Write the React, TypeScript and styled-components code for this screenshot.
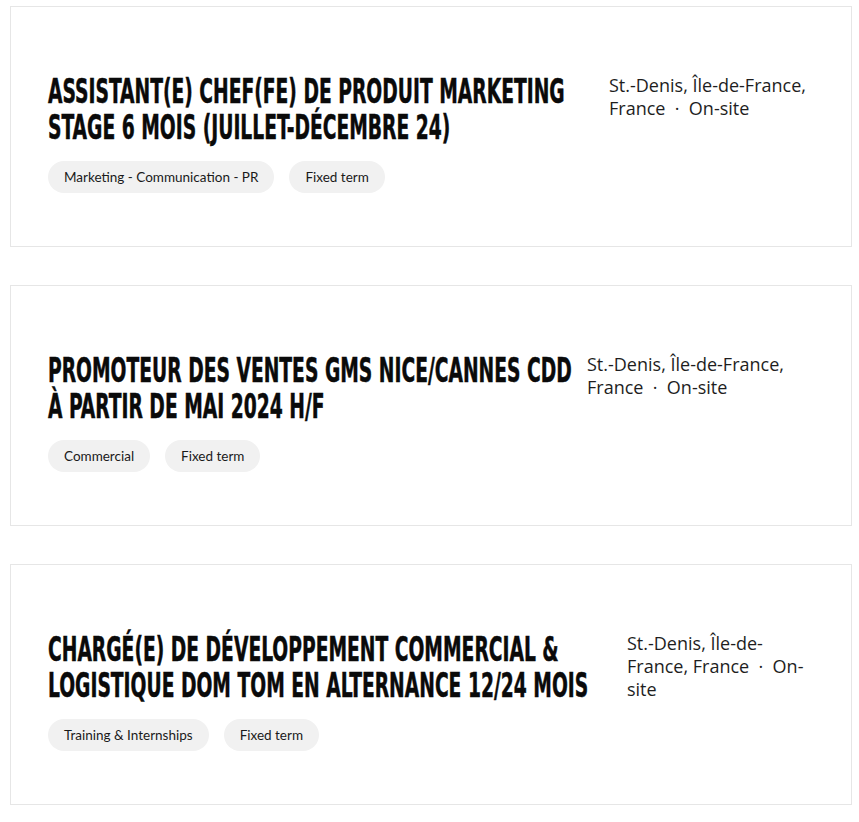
import React from 'react'
import styled, { createGlobalStyle } from 'styled-components'

const GlobalStyle = createGlobalStyle`
  body {
    margin: 0;
    background: #ffffff;
  }
`

const JobList = styled.div`
  display: flex;
  flex-direction: column;
  gap: 38px;
  padding: 6px 7px 16px 10px;
`

const Card = styled.article`
  display: flex;
  gap: 12px;
  align-items: flex-start;
  border: 1px solid #e6e6e6;
  padding: 67px 38px 53px 37px;
`

const Main = styled.div`
  flex: 1;
  min-width: 0;
`

const Title = styled.h2`
  margin: 0;
  font-family: "DejaVu Sans", sans-serif;
  font-stretch: condensed;
  font-weight: 700;
  font-size: 33px;
  line-height: 36px;
  color: #0a0a0a;
  -webkit-text-stroke: 0.5px #0a0a0a;
`

const TitleLine = styled.span`
  display: block;
  white-space: nowrap;
  transform: scaleX(0.63);
  transform-origin: left center;
`

const Tags = styled.div`
  display: flex;
  gap: 15px;
  margin-top: 15px;
`

const Tag = styled.span`
  display: inline-flex;
  align-items: center;
  height: 32px;
  padding: 0 16px;
  border-radius: 16px;
  background: #f1f1f1;
  font-family: Lato, "Open Sans", sans-serif;
  font-size: 13.5px;
  color: #1a1a1a;
`

const Location = styled.p<{ $width: number }>`
  margin: 0;
  width: ${({ $width }) => $width}px;
  flex-shrink: 0;
  font-family: "Open Sans", sans-serif;
  font-size: 18px;
  line-height: 23px;
  color: #1e1e1e;
`

const jobs = [
  {
    title: ['ASSISTANT(E) CHEF(FE) DE PRODUIT MARKETING', 'STAGE 6 MOIS (JUILLET-DÉCEMBRE 24)'],
    tags: ['Marketing - Communication - PR', 'Fixed term'],
    place: 'St.-Denis, Île-de-France, France',
    mode: 'On-site',
    width: 204,
  },
  {
    title: ['PROMOTEUR DES VENTES GMS NICE/CANNES CDD', 'À PARTIR DE MAI 2024 H/F'],
    tags: ['Commercial', 'Fixed term'],
    place: 'St.-Denis, Île-de-France, France',
    mode: 'On-site',
    width: 226,
  },
  {
    title: ['CHARGÉ(E) DE DÉVELOPPEMENT COMMERCIAL &', 'LOGISTIQUE DOM TOM EN ALTERNANCE 12/24 MOIS'],
    tags: ['Training & Internships', 'Fixed term'],
    place: 'St.-Denis, Île-de-France, France',
    mode: 'On-site',
    width: 186,
  },
]

const App = () => {
  return (
    <>
      <GlobalStyle />
      <JobList>
        {jobs.map((job) => (
          <Card key={job.title[0]}>
            <Main>
              <Title>
                {job.title.map((line) => (
                  <TitleLine key={line}>{line}</TitleLine>
                ))}
              </Title>
              <Tags>
                {job.tags.map((t) => (
                  <Tag key={t}>{t}</Tag>
                ))}
              </Tags>
            </Main>
            <Location $width={job.width}>
              {`${job.place}\u00a0 · \u00a0${job.mode}`}
            </Location>
          </Card>
        ))}
      </JobList>
    </>
  )
}

export default App
